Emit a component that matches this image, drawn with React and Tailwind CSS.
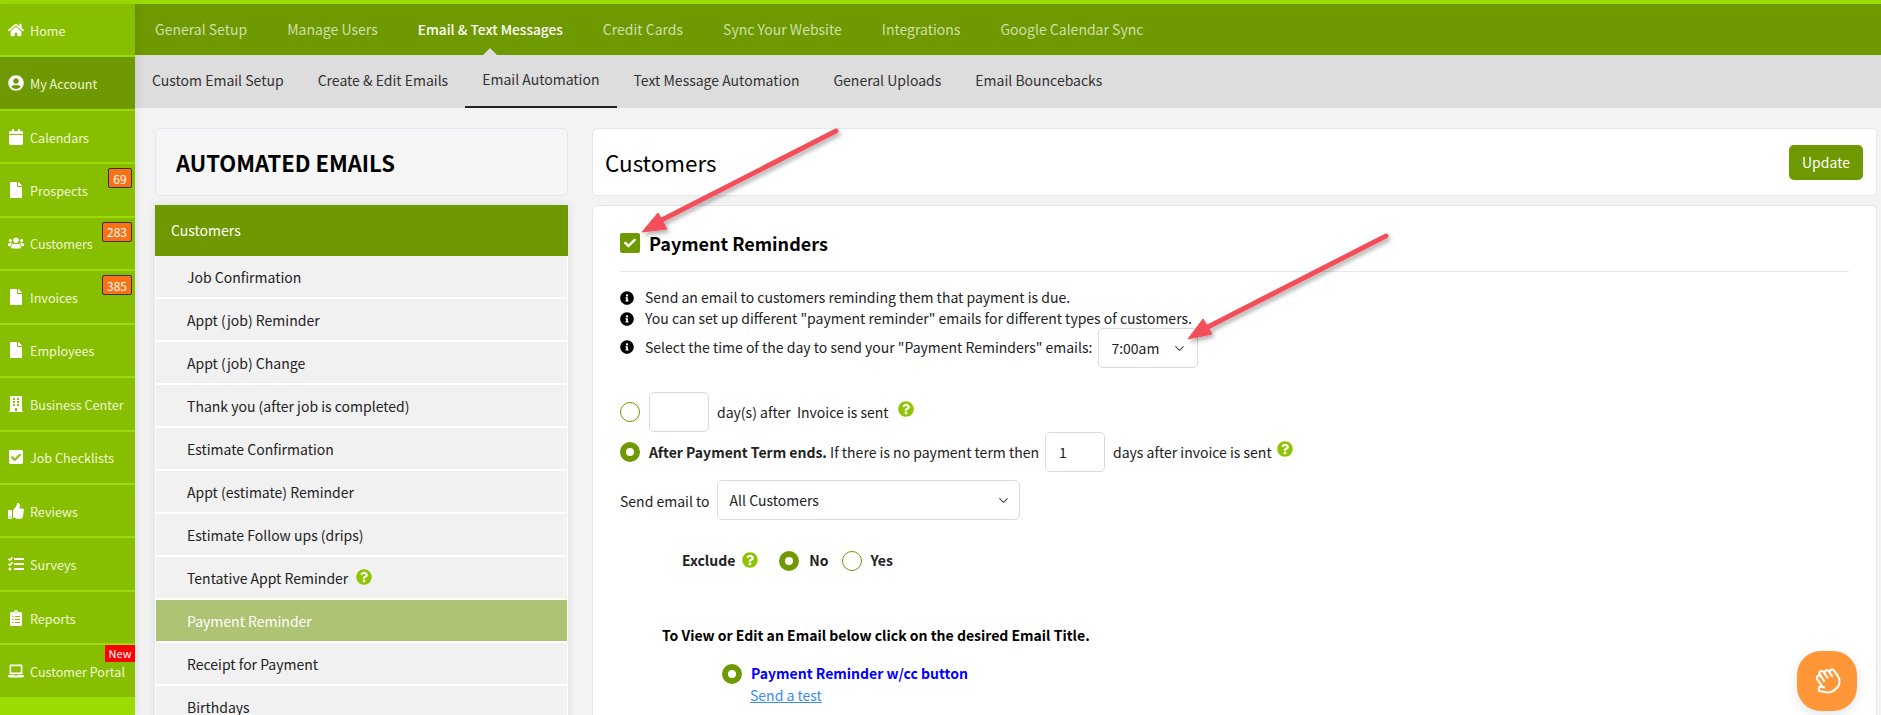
import React from 'react';
import {
  FaHome, FaUserCircle, FaCalendar, FaFile, FaUsers, FaBuilding, FaCheckSquare,
  FaThumbsUp, FaTasks, FaClipboardList, FaLaptop, FaInfoCircle, FaQuestionCircle, FaCheck,
} from 'react-icons/fa';
import { ChevronDown, Hand } from 'lucide-react';

const sideItems = [
  { label: 'Home', icon: FaHome },
  { label: 'My Account', icon: FaUserCircle, active: true },
  { label: 'Calendars', icon: FaCalendar },
  { label: 'Prospects', icon: FaFile, badge: '69' },
  { label: 'Customers', icon: FaUsers, badge: '283' },
  { label: 'Invoices', icon: FaFile, badge: '385' },
  { label: 'Employees', icon: FaFile },
  { label: 'Business Center', icon: FaBuilding },
  { label: 'Job Checklists', icon: FaCheckSquare },
  { label: 'Reviews', icon: FaThumbsUp },
  { label: 'Surveys', icon: FaTasks },
  { label: 'Reports', icon: FaClipboardList },
  { label: 'Customer Portal', icon: FaLaptop, isNew: true },
];

const topNav = ['General Setup', 'Manage Users', 'Email & Text Messages', 'Credit Cards', 'Sync Your Website', 'Integrations', 'Google Calendar Sync'];
const subNav = ['Custom Email Setup', 'Create & Edit Emails', 'Email Automation', 'Text Message Automation', 'General Uploads', 'Email Bouncebacks'];
const emailRows = [
  'Job Confirmation', 'Appt (job) Reminder', 'Appt (job) Change', 'Thank you (after job is completed)',
  'Estimate Confirmation', 'Appt (estimate) Reminder', 'Estimate Follow ups (drips)', 'Tentative Appt Reminder',
  'Payment Reminder', 'Receipt for Payment', 'Birthdays',
];

const Radio = ({ on }) => (
  <span className={`block w-5 h-5 shrink-0 rounded-full bg-white ${on ? 'border-[6px] border-[#6e9900]' : 'border border-[#6e9900]'}`} />
);

const Help = ({ className = '' }) => <FaQuestionCircle className={`text-[#8fc400] text-[16px] shrink-0 ${className}`} />;

const Field = ({ className = '', children }) => (
  <div className={`h-10 bg-white border border-[#d9d9d9] rounded-[5px] flex items-center shrink-0 ${className}`}>{children}</div>
);

const Info = ({ children, className = '' }) => (
  <div className={`flex items-center ${className}`}>
    <FaInfoCircle className="text-[14px] text-black mr-[11px] shrink-0" />
    <span>{children}</span>
  </div>
);

export default function App() {
  return (
    <div className="relative h-[715px] w-[1881px] overflow-hidden bg-[#f3f3f3] font-['Noto_Sans_CJK_SC','Noto_Sans',sans-serif] text-[14px] leading-[21px] text-[#222]">
      <div className="h-1 bg-[#9bdc05]" />
      <div className="flex">
        {/* sidebar */}
        <aside className="w-[135px] shrink-0 bg-[#9bdc05] h-[711px] shadow-[2px_0_8px_rgba(0,0,0,0.08)] z-10">
          {sideItems.map((item) => (
            <div
              key={item.label}
              className={`relative h-[53.45px] flex items-center pl-2 border-b-2 border-[#9bdc05] text-[12.6px] text-[#eef7d8] ${item.active ? 'bg-[#6e9900]' : 'bg-[#87bf00]'}`}
            >
              <span className="w-[22px] flex justify-start"><item.icon className="text-[16px] text-white" /></span>
              <span className="whitespace-nowrap mt-[1px]">{item.label}</span>
              {item.badge && (
                <span className={`absolute right-[3px] top-[4px] h-5 flex items-center justify-center bg-[#f97316] border border-[#333] rounded-[2px] text-[12px] text-white ${item.badge.length === 2 ? 'w-6' : 'w-[30px]'}`}>{item.badge}</span>
              )}
              {item.isNew && (
                <span className="absolute right-0 top-0 w-[30px] h-[17px] flex items-center justify-center bg-[#ff0000] text-white text-[11px]">New</span>
              )}
            </div>
          ))}
        </aside>

        <div className="flex-1 min-w-0">
          {/* top nav */}
          <nav className="h-[51px] bg-[#6e9900] flex items-center pl-[20px] gap-[40px] text-[14px]">
            {topNav.map((t, i) => (
              <span key={t} className={`relative whitespace-nowrap h-full flex items-center ${i === 2 ? 'text-white font-medium text-[13.7px]' : 'text-[#cfdfae]'}`}>
                {t}
                {i === 2 && (
                  <span className="absolute bottom-0 left-1/2 -ml-[7px] w-0 h-0 border-x-[7px] border-x-transparent border-b-[7px] border-b-[#ddd]" />
                )}
              </span>
            ))}
          </nav>

          {/* sub nav */}
          <nav className="h-[53px] bg-[#ddd] flex pl-[17px] text-[14px] text-[#333]">
            {subNav.map((t, i) => (
              <span key={t} className={`flex items-center px-[17px] h-[53px] pb-[2px] whitespace-nowrap first:pl-0 ${i === 2 ? 'border-b-2 border-[#222]' : ''}`}>{t}</span>
            ))}
          </nav>

          <div className="flex pt-[20px] pl-5 pr-1 gap-[24px]">
            {/* left column */}
            <div className="w-[413px] shrink-0">
              <div className="h-[68px] bg-[#f6f6f6] border border-[#e3e6f0] rounded-[5px] flex items-center pl-5 text-[22px] font-bold text-black">
                AUTOMATED EMAILS
              </div>
              <div className="mt-[9px] shadow-[0_0_10px_rgba(0,0,0,0.1)]">
                <div className="h-[51px] bg-[#6e9900] flex items-center pl-[16px] text-white">Customers</div>
                <div className="bg-white px-[1px]">
                  {emailRows.map((r) => {
                    const sel = r === 'Payment Reminder';
                    return (
                      <div key={r} className={`h-[43px] flex items-center pl-[31px] pt-px border-b-2 border-white ${sel ? 'bg-[#aec374] text-white' : 'bg-[#f1f1f1] text-[#222]'}`}>
                        {r}
                        {r.startsWith('Tentative') && <Help className="ml-2 -mt-[3px]" />}
                      </div>
                    );
                  })}
                </div>
              </div>
            </div>

            {/* right column */}
            <div className="flex-1 min-w-0">
              <div className="h-[68px] bg-white border border-[#e3e6f0] rounded-[5px] flex items-center justify-between pl-3 pr-[13px]">
                <span className="text-[22.4px] text-black">Customers</span>
                <button className="w-[74px] h-[35px] bg-[#6e9900] rounded-[5px] text-white text-[14px]">Update</button>
              </div>

              <div className="mt-[9px] h-[520px] bg-white border border-[#e3e6f0] rounded-[5px] pl-[27px] pr-[27px] pt-[26px]">
                <div className="flex items-center h-[22px]">
                  <span className="w-5 h-5 bg-[#6e9900] rounded-[2px] flex items-center justify-center mr-[9px]">
                    <FaCheck className="text-white text-[12px]" />
                  </span>
                  <span className="text-[18px] font-bold text-black">Payment Reminders</span>
                </div>
                <div className="mt-[17px] border-t border-[#e3e6f0]" />

                <Info className="mt-[15px]">Send an email to customers reminding them that payment is due.</Info>
                <Info>You can set up different "payment reminder" emails for different types of customers.</Info>
                <div className="flex items-center mt-[-1px]">
                  <Info className="-mt-[2px]">Select the time of the day to send your "Payment Reminders" emails:</Info>
                  <Field className="w-[100px] ml-[6px] justify-between pl-3 pr-[10px]">
                    <span>7:00am</span>
                    <ChevronDown size={15} className="text-[#555]" />
                  </Field>
                </div>

                <div className="flex items-center mt-6">
                  <Radio />
                  <Field className="w-[60px] ml-[9px]" />
                  <span className="ml-[8px] whitespace-pre">day(s) after  Invoice is sent</span>
                  <Help className="ml-[9px] -mt-[6px]" />
                </div>
                <div className="flex items-center">
                  <Radio on />
                  <span className="ml-[9px]"><b className="font-bold">After Payment Term ends.</b> If there is no payment term then</span>
                  <Field className="w-[60px] ml-[6px] pl-[13px]">1</Field>
                  <span className="ml-2">days after invoice is sent</span>
                  <Help className="ml-[5px] -mt-[6px]" />
                </div>
                <div className="flex items-center mt-2">
                  <span className="mr-[7px] mt-[3px]">Send email to</span>
                  <Field className="w-[303px] justify-between pl-3 pr-[8px]">
                    <span>All Customers</span>
                    <ChevronDown size={15} className="text-[#555]" />
                  </Field>
                </div>
                <div className="flex items-center mt-[30px] ml-[62px] font-bold">
                  <span>Exclude</span>
                  <Help className="ml-[7px] -mt-[2px]" />
                  <span className="ml-[21px]"><Radio on /></span>
                  <span className="ml-[10px]">No</span>
                  <span className="ml-[13px]"><Radio /></span>
                  <span className="ml-[9px]">Yes</span>
                </div>
                <div className="mt-[54px] ml-[42px] font-bold text-black">To View or Edit an Email below click on the desired Email Title.</div>
                <div className="flex items-center mt-[17px] ml-[102px]">
                  <Radio on />
                  <span className="ml-[9px] font-bold text-[#0000ff]">Payment Reminder w/cc button</span>
                </div>
                <div className="ml-[130px] mt-[1px] text-[#3b8bf5] underline">Send a test</div>
              </div>
            </div>
          </div>
        </div>
      </div>

      {/* annotation arrows */}
      <svg className="absolute inset-0 pointer-events-none z-20" width="1881" height="715">
        <defs>
          <filter id="arrowShadow" x="-20%" y="-20%" width="140%" height="140%">
            <feDropShadow dx="2" dy="3" stdDeviation="2" floodColor="#000" floodOpacity="0.3" />
          </filter>
        </defs>
        <g filter="url(#arrowShadow)" fill="#f2505a" stroke="#f2505a">
          <line x1="836" y1="131" x2="652" y2="225" strokeWidth="5" strokeLinecap="round" />
          <polygon points="642,232 658,213 667,229" strokeWidth="1" />
          <line x1="1386" y1="236" x2="1200" y2="331" strokeWidth="5" strokeLinecap="round" />
          <polygon points="1188,339 1203,319 1212,334" strokeWidth="1" />
        </g>
      </svg>

      {/* chat button */}
      <div className="absolute left-[1797px] top-[651px] w-[60px] h-[60px] rounded-[24px] bg-[#ff9638] shadow-[0_4px_12px_rgba(0,0,0,0.1)] flex items-center justify-center z-20">
        <Hand size={28} strokeWidth={1.8} className="text-white -rotate-[35deg]" />
      </div>
    </div>
  );
}
